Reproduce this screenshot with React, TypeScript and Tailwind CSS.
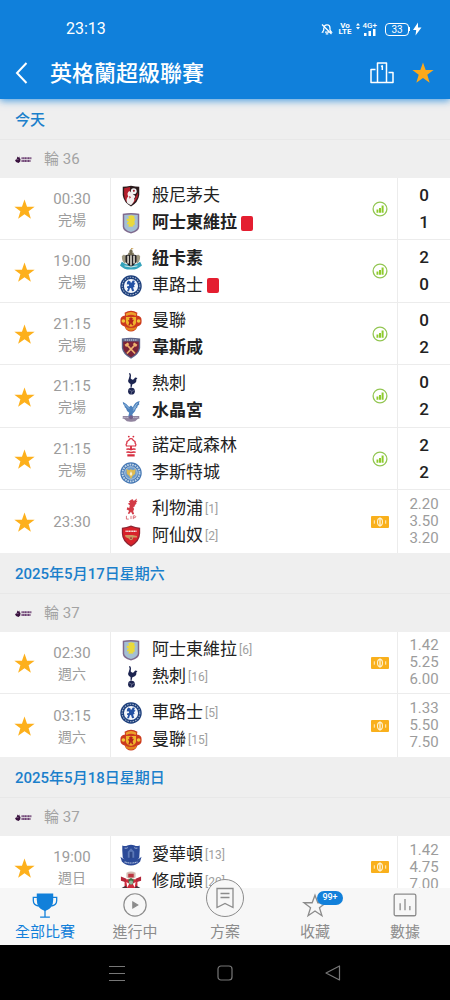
import { useState, type ReactNode } from "react";

type Club =
  | "bournemouth" | "villa" | "newcastle" | "chelsea" | "united" | "westham" | "spurs"
  | "palace" | "forest" | "leicester" | "liverpool" | "arsenal" | "everton" | "southampton";

interface Team {
  club: Club;
  name: string;
  rank?: number;
  winner?: boolean;
  redCard?: boolean;
}

interface Match {
  time: string;
  note?: string;
  teams: [Team, Team];
  score?: [number, number];
  odds?: string[];
}

interface MatchDay {
  title: string;
  round: string;
  matches: Match[];
}

const DAYS: MatchDay[] = [
  {
    title: "今天",
    round: "輪 36",
    matches: [
      { time: "00:30", note: "完場", score: [0, 1], teams: [{ club: "bournemouth", name: "般尼茅夫" }, { club: "villa", name: "阿士東維拉", winner: true, redCard: true }] },
      { time: "19:00", note: "完場", score: [2, 0], teams: [{ club: "newcastle", name: "紐卡素", winner: true }, { club: "chelsea", name: "車路士", redCard: true }] },
      { time: "21:15", note: "完場", score: [0, 2], teams: [{ club: "united", name: "曼聯" }, { club: "westham", name: "韋斯咸", winner: true }] },
      { time: "21:15", note: "完場", score: [0, 2], teams: [{ club: "spurs", name: "熱刺" }, { club: "palace", name: "水晶宮", winner: true }] },
      { time: "21:15", note: "完場", score: [2, 2], teams: [{ club: "forest", name: "諾定咸森林" }, { club: "leicester", name: "李斯特城" }] },
      { time: "23:30", odds: ["2.20", "3.50", "3.20"], teams: [{ club: "liverpool", name: "利物浦", rank: 1 }, { club: "arsenal", name: "阿仙奴", rank: 2 }] },
    ],
  },
  {
    title: "2025年5月17日星期六",
    round: "輪 37",
    matches: [
      { time: "02:30", note: "週六", odds: ["1.42", "5.25", "6.00"], teams: [{ club: "villa", name: "阿士東維拉", rank: 6 }, { club: "spurs", name: "熱刺", rank: 16 }] },
      { time: "03:15", note: "週六", odds: ["1.33", "5.50", "7.50"], teams: [{ club: "chelsea", name: "車路士", rank: 5 }, { club: "united", name: "曼聯", rank: 15 }] },
    ],
  },
  {
    title: "2025年5月18日星期日",
    round: "輪 37",
    matches: [
      { time: "19:00", note: "週日", odds: ["1.42", "4.75", "7.00"], teams: [{ club: "everton", name: "愛華頓", rank: 13 }, { club: "southampton", name: "修咸頓", rank: 20 }] },
    ],
  },
];

const CRESTS: Record<Club, ReactNode> = {
  bournemouth: (
    <>
      <path d="M3 2Q7 2 12 .8Q17 2 21 2V11Q20 19 12 23.5Q4 19 3 11Z" fill="#2a1a1c" />
      <path d="M4.5 3.5L11 2.3V12L7 18.5Q4.500 15 4.500 10Z" fill="#b51f2c" />
      <path d="M15 17.500L19.500 8V12Q18.500 16.500 13 21Z" fill="#b51f2c" />
      <path d="M8 20Q6 15 9 12.500Q7 9 10 6.500Q13 8 15 11Q18 12 15.500 14.500Q16.500 18 12 22Z" fill="#f3eeee" />
      <circle cx="15" cy="6.800" r="3.200" fill="#f2f2f2" />
      <path d="M14 6l1.200-1L16.300 6l-.5 1.400h-1.400zM10 12l2 1-1.500 2z" fill="#a31c29" />
    </>
  ),
  villa: (
    <>
      <path d="M3 2Q12 0 21 2V16Q21 21 12 23.500Q3 21 3 16Z" fill="#806a8e" />
      <path d="M4.600 3.400Q12 1.800 19.400 3.400V15.500Q19.400 19.600 12 21.800Q4.600 19.600 4.600 15.500Z" fill="#a4bfd4" />
      <path d="M9 4.500l3-1 4 .8-.6 2.200 1.400 2-1.200 1.600.7 3.600-2 .4.500 1.600-5.600.4.400-3-2 .6.200-2.300 2-.8-2.600-1.400.4-2 2.200.3z" fill="#ead93c" />
    </>
  ),
  newcastle: (
    <>
      <path d="M2 15Q12 23 22 15L24 19Q18 24 12 23.500Q5 24 0 19Z" fill="#35a3bb" />
      <path d="M2 9Q4 5.500 7 9L6 17Q2 16 2 9ZM22 9Q20 5.500 17 9L18 17Q22 16 22 9Z" fill="#a09a82" />
      <path d="M6 8Q12 5.500 18 8V15Q16 19 12 20.500Q8 19 6 15Z" fill="#242326" />
      <path d="M8 8.500h1.600v8.500H8zM11.200 8h1.600v11h-1.600zM14.500 8.500h1.600v8.500h-1.600z" fill="#efe9dc" />
      <path d="M9 7.500V5l1.200.7V3L12 1l1.800 2v2.700L15 5v2.500z" fill="#746d53" />
      <path d="M12 1V0l3 .6-2 1z" fill="#c89e50" />
      <path d="M5 19.500Q12 22 19 19.500" fill="none" stroke="#e2f1ee" strokeWidth="1" />
    </>
  ),
  chelsea: (
    <>
      <circle cx="12" cy="12" r="11.700" fill="#1d3f7c" />
      <circle cx="12" cy="12" r="9.600" fill="none" stroke="#a3b4cc" strokeWidth="1.200" strokeDasharray="1.600 1.300" />
      <circle cx="12" cy="12" r="7.700" fill="#f4f7fb" />
      <path d="M9 6l2.400 1 .6 2 2-3 2.200.4-.7 2.200 1.500.8-1.800 1.800.8 2-1.800.5 1.300 3.400-2.300.5-1.200-3.400-1.200.3-1 3.100H7.600l1.300-3.200-1.300-.4.300-1.600 2.100-.4-.6-1.900-2 .2.200-2z" fill="#2452a4" />
    </>
  ),
  united: (
    <>
      <path d="M5 3Q12-1.500 19 3L18.500 6Q24 6.500 23.500 12Q24 17 19 18Q17 23.500 12 23.500Q7 23.500 5 18Q0 17 .5 12Q0 6.500 5.500 6Z" fill="#cc3a1d" />
      <path d="M6 4Q12 .5 18 4L17 6.500Q12 4 7 6.500Z" fill="#eda02a" />
      <path d="M5.500 18Q12 21.500 18.500 18L17 21Q12 24 7 21Z" fill="#e3861f" />
      <circle cx="3.700" cy="12" r="2" fill="#f2c53b" />
      <circle cx="20.300" cy="12" r="2" fill="#f2c53b" />
      <path d="M6.500 7.500h11v6Q17 17 12 18.300Q7 17 6.500 13.500Z" fill="#efb42c" />
      <path d="M10 9l2-1 2 1-.5 2 1.700-.5-1.500 3.500 1 2.500h-1.700L12 14.500l-1.500 2.500H9l1-3.500-1.500-2.500 1.800.4z" fill="#b3221c" />
    </>
  ),
  westham: (
    <>
      <path d="M2 1.500Q12 .3 22 1.500V12Q21 19 12 23.700Q3 19 2 12Z" fill="#5b6388" />
      <path d="M3.500 5H20.500V12Q19.500 18 12 22Q4.500 18 3.500 12Z" fill="#7b2338" />
      <path d="M5 3.200H19" stroke="#dcdfe8" strokeWidth="1.200" strokeDasharray="1.500 .8" />
      <path d="M7 8l9.500 10M17 8L7.500 18" stroke="#efb36e" strokeWidth="1.800" />
      <path d="M5 8.500L8.500 6l1.500 2-3.400 2.800zM19 8.500L15.500 6 14 8l3.400 2.800z" fill="#efb36e" />
    </>
  ),
  spurs: (
    <>
      <circle cx="12.500" cy="19.800" r="3.700" fill="#1c2450" />
      <path d="M10 18.500l3 1.500 2.500-1M12 23l1-3" fill="none" stroke="#929ab5" strokeWidth=".6" />
      <path d="M9.800 0Q12 0 12 2.500L11.700 6Q14 9 16.500 4.800L19 5.500L17.800 7Q18.500 11 13.500 12.200L12.500 16H11.500V12Q7.500 10 9.500 6.500L10.500 3Z" fill="#1c2450" />
    </>
  ),
  palace: (
    <>
      <path d="M3 17.500h18v2H22L19 21Q17 24 12 23.700Q7 24 5 21L2 19.500H3Z" fill="#91849f" />
      <path d="M4 19h16" stroke="#dbdce7" strokeWidth="1" strokeDasharray="1 1" />
      <path d="M3 2Q7 4 10 7.500L12 6L14 8Q16 2 21.500 1Q20 4 21 5Q18.500 6 19 8Q17 9 16.500 12L13.500 15.500L14 18H9L10 14Q7 12 6.500 9Q4.500 8 5 6.500Q3 5 3 2Z" fill="#4e82bd" />
      <path d="M5 4.500l5 5M19 3.500l-4.500 6M17.500 7l-3 4.500" stroke="#b3d4ef" strokeWidth=".8" />
      <circle cx="12" cy="18.800" r="2.200" fill="#74618c" />
    </>
  ),
  forest: (
    <>
      <circle cx="9.600" cy="1.700" r="1" fill="#d72d3f" />
      <circle cx="14.600" cy="1.700" r="1" fill="#d72d3f" />
      <path d="M12 4Q14 4 14.500 6Q17 6.500 16.500 9Q18 10 17 12H7Q6 10 7.500 9Q7 6.500 9.500 6Q10 4 12 4Z" fill="#fff" stroke="#d72d3f" strokeWidth="1.300" />
      <path d="M11 12h2v3h-2zM7 14.800q2.500-1 5 .2 2.500-1 5-.2v1.600q-2.500-.6-5 .4-2.500-1-5-.4zM7 18q2.500-.8 5 .2 2.500-1 5-.2v1.600q-2.500-.4-5 .4-2.500-.8-5-.4zM8 21h8v2.500H8z" fill="#d72d3f" />
    </>
  ),
  leicester: (
    <>
      <circle cx="12" cy="12" r="11.700" fill="#4678b4" />
      <circle cx="12" cy="12" r="9.300" fill="none" stroke="#c1d5e8" strokeWidth="2" strokeDasharray="1.800 1" />
      <circle cx="12" cy="12" r="6.900" fill="#6f9ccb" stroke="#dce8f2" strokeWidth=".7" />
      <path d="M7 7.500L10 9l2-1 2 1 3-1.500-.5 5.500-2.500 2-2 3.500-2-3.500L7.500 13z" fill="#e0bb50" />
      <path d="M12 10l1.500 3-1.500 2.500-1.500-2.500z" fill="#f8efd2" />
    </>
  ),
  liverpool: (
    <>
      <path d="M12 2l2-.6 1 2 3.500-2.800-.8 2.800 1.500-.3-2 2.500 1.200.3-2.500 2 .8.8-2.300 1.300 1 2-1 2.500 1 3-1.700.5-1.700-3-2 2.500-1.500-.7 1.500-3-2.700-1.300.6-2.500 2.200 1 .6-3-2.200-1.600L11 5l-1.500-1z" fill="#d23a46" />
      <path d="M7 19.500V23H9.500M12 19.500V23M14.500 23v-3.500h2q1.500 1 0 2h-2" fill="none" stroke="#d96872" strokeWidth="1" />
    </>
  ),
  arsenal: (
    <>
      <path d="M2 3Q7 2.500 12 .5Q17 2.500 22 3V9Q22 18 12 23.700Q2 18 2 9Z" fill="#8c2633" />
      <path d="M3.300 4Q8 3.600 12 2Q16 3.600 20.700 4V9Q20.500 17 12 22Q3.500 17 3.300 9Z" fill="#d8222b" />
      <path d="M6 6.800H18" stroke="#f6e8e8" strokeWidth="1.700" strokeDasharray="1.400 .4" />
      <path d="M5.500 11h8l5 1v1.600h-4l-1.500 1.500H10l-4-2z" fill="#cf9a62" />
      <circle cx="12" cy="14.300" r="2.300" fill="#c39a62" />
      <circle cx="12" cy="14.300" r="1" fill="#9d2b33" />
    </>
  ),
  everton: (
    <>
      <path d="M2.500 1.500Q6 3 8 1.500Q12 .3 16 1.500Q18 3 21.500 1.500V7L21 15Q17 20 12 21Q7 20 3 15L2.500 7Z" fill="#2b4a98" />
      <path d="M8.500 15V8.500L12 4.500L15.500 8.500V15Z" fill="#5b78b8" />
      <path d="M10.500 8.500h3v7h-3z" fill="#2c4687" />
      <path d="M5 4.500Q7 5 8.500 4M19 4.500Q17 5 15.500 4" stroke="#a8b8db" fill="none" />
      <path d="M.5 14Q4 17.500 12 18Q20 17.500 23.500 14L22 19Q18 23.500 12 23.500Q6 23.500 2 19Z" fill="#2b4a98" />
      <path d="M5 19.500Q12 22 19 19.500" stroke="#b4c3e0" strokeWidth="1.200" strokeDasharray="1.400 .5" fill="none" />
    </>
  ),
  southampton: (
    <>
      <path d="M7 2Q12-1 17 2V7Q12 10 7 7Z" fill="#d3bdb3" />
      <path d="M9 3h6v4H9z" fill="#bb3440" />
      <path d="M5 9h14v7Q18 21 12 23Q6 21 5 16Z" fill="#cf2b3d" />
      <path d="M1 6l6 2.500L5.500 12 1 10.500zM23 6l-6 2.500 1.500 3.500 4.500-1.500z" fill="#b32639" />
      <path d="M9 9.500l3-2 3 2-1 5h-4z" fill="#397746" />
      <path d="M7 12l3 2-2 4zM17 12l-3 2 2 4z" fill="#fff" />
      <circle cx="12" cy="12.500" r="2.200" fill="#8fb99a" />
      <path d="M1 19l5-3 3 4-5 3zM23 19l-5-3-3 4 5 3z" fill="#453139" />
    </>
  ),
};

function Star({ className }: { className: string }) {
  return (
    <svg viewBox="0 0 24 24" className={className} aria-hidden="true">
      <path d="M12 .5l2.900 8.300h8.700l-6.900 5.200 2.600 8.700L12 17.500l-7.300 5.200 2.600-8.700L.4 8.800h8.700z" />
    </svg>
  );
}

function LeagueLogo() {
  return (
    <svg viewBox="0 0 34 14" className="h-[7px] w-[17px]" aria-hidden="true">
      <path d="M5 1l2 2 2-2v3l2 2-.5 5L7 14 2 12 0 8l3-1 1-3z" fill="#3a123f" />
      <path d="M5 6l2 .5-1.500 2z" fill="#d9c4dc" />
      <path d="M13 4.500H33M13 10H31" stroke="#6d4173" strokeWidth="3.600" strokeDasharray="2.600 .6" />
    </svg>
  );
}

function StatsIcon() {
  return (
    <svg viewBox="0 0 16 16" className="size-4" aria-hidden="true">
      <circle cx="8" cy="8" r="6.900" fill="none" stroke="#93c653" strokeWidth="1.300" />
      <path d="M4.500 8.500h1.900v3.300H4.500zM7 7h2v4.800H7zM9.600 4.500h2v7.300h-2z" fill="#8ecb2c" />
    </svg>
  );
}

function OddsIcon() {
  return (
    <svg viewBox="0 0 18 12" className="h-3 w-[18px]" aria-hidden="true">
      <rect width="18" height="12" rx="1" fill="#f9b01c" />
      <ellipse cx="9" cy="6" rx="2.500" ry="3.600" fill="none" stroke="#fff1cd" strokeWidth="1.100" />
      <path d="M9 1.500v9" stroke="#fff1cd" strokeWidth="1.400" />
      <path d="M3.300 4.300v3.400M14.700 4.300v3.400" stroke="#fff1cd" strokeWidth="1" />
    </svg>
  );
}

function StatusBar() {
  return (
    <div className="flex h-[22px] items-center pl-[66px] pr-7 text-white">
      <span className="text-[16px]">23:13</span>
      <div className="ml-auto flex items-center">
        <svg viewBox="0 0 24 24" className="size-3" fill="none" stroke="currentColor" strokeWidth="2.500" aria-hidden="true">
          <path d="M7 6Q9 3.500 12 3.500Q18 4 18 10V14L21 18H8M5.500 9V14L3 18H5M9.500 21.500H14.500M2 3L21 22" />
        </svg>
        <span className="ml-1.5 flex w-3 flex-col items-center text-[8px] leading-[6px] font-bold">
          <span>Vo</span>
          <span>LTE</span>
        </span>
        <svg viewBox="0 0 6 12" className="ml-1 h-3 w-1.5" fill="currentColor" aria-hidden="true">
          <path d="M3 0l2 2.500H1zM3 6.500L1 4h4z" />
        </svg>
        <span className="flex w-4 flex-col items-end">
          <span className="text-[8px] leading-[6px] font-medium">4G+</span>
          <svg viewBox="0 0 14 7" className="h-[7px] w-3.5" fill="currentColor" aria-hidden="true">
            <path d="M1 4h2.500v3H1zM5.500 2H8v5H5.500zM10 0h2.500v7H10z" />
          </svg>
        </span>
        <span className="ml-2 flex h-[13px] w-6 items-center justify-center rounded-[4px] border border-white text-[10px]">33</span>
        <span className="h-1 w-px bg-white" />
        <svg viewBox="0 0 10 14" className="ml-0.5 h-3.5 w-2.5" fill="currentColor" aria-hidden="true">
          <path d="M6 .5L1 8h3.200L3.500 13.500 9.500 5.500H6z" />
        </svg>
      </div>
    </div>
  );
}

function TeamLine({ team }: { team: Team }) {
  return (
    <div className="flex h-[27px] items-center">
      <svg viewBox="0 0 24 24" className="size-[22px] shrink-0" aria-hidden="true">
        {CRESTS[team.club]}
      </svg>
      <span className={`ml-2.5 text-[17px] whitespace-nowrap text-[#222] ${team.winner ? "font-bold" : ""}`}>{team.name}</span>
      {team.rank && <span className="ml-0.5 text-[12px] text-[#a0a0a0]">[{team.rank}]</span>}
      {team.redCard && <span className="ml-1 h-[15px] w-3 rounded-xs bg-[#e41e30]" />}
    </div>
  );
}

function MatchRow({ match }: { match: Match }) {
  const [starred, setStarred] = useState(true);

  return (
    <li className="flex h-[62px] border-b border-[#ececec] bg-white last:border-b-0 even:h-[63px]">
      <button aria-label="收藏" aria-pressed={starred} onClick={() => setStarred(!starred)} className="flex w-12 shrink-0 items-center justify-center pt-0.5">
        <Star className={`size-[21px] ${starred ? "fill-[#fdb01c]" : "fill-gray-300"}`} />
      </button>
      <div className="mr-3.5 flex w-12 shrink-0 flex-col justify-center pt-0.5 text-center text-[#9c9c9c]">
        <span className="text-[15px] leading-[21px]">{match.time}</span>
        {match.note && <span className="text-[14px] leading-[21px]">{match.note}</span>}
      </div>
      <div className="flex min-w-0 flex-1 flex-col justify-center border-l border-[#ececec] pt-0.5 pl-[9px]">
        {match.teams.map((team) => (
          <TeamLine key={team.club} team={team} />
        ))}
      </div>
      <div className="mr-2 flex w-[18px] shrink-0 items-center justify-center">{match.odds ? <OddsIcon /> : <StatsIcon />}</div>
      <div className="flex w-[53px] shrink-0 flex-col justify-center border-l border-[#ececec] text-center">
        {match.score?.map((goals, i) => (
          <span key={i} className="text-[17px] leading-[27px] font-medium text-[#222]">{goals}</span>
        ))}
        {match.odds?.map((odd) => (
          <span key={odd} className="text-[15px] leading-[17px] text-[#9c9c9c]">{odd}</span>
        ))}
      </div>
    </li>
  );
}

function TabItem({ label, active, children }: { label: string; active?: boolean; children: ReactNode }) {
  return (
    <button className={`flex flex-1 flex-col items-center justify-end ${active ? "text-[#1280da]" : "text-[#8c8c8c]"}`}>
      {children}
      <span className="text-[15px] leading-[26px]">{label}</span>
    </button>
  );
}

export default function App() {
  return (
    <div className="flex h-screen flex-col bg-[#efefef] font-[Roboto,'Noto_Sans_CJK_TC',sans-serif]">
      <header className="relative z-10 h-[99px] shrink-0 bg-[#1080db] pt-[18px] shadow-[0_2px_7px_#1080dbb0]">
        <StatusBar />
        <div className="mt-[11px] flex h-11 items-center pr-4 pl-3.5 text-white">
          <button aria-label="返回">
            <svg viewBox="0 0 16 24" className="h-6 w-4" fill="none" stroke="currentColor" strokeWidth="2" aria-hidden="true">
              <path d="M12.500 2L3 12l9.500 10" />
            </svg>
          </button>
          <h1 className="ml-5 text-[22px] font-medium">英格蘭超級聯賽</h1>
          <button aria-label="排名" className="ml-auto">
            <svg viewBox="0 0 24 22" className="h-[22px] w-6" fill="none" stroke="currentColor" strokeWidth="1.500" strokeLinejoin="round" aria-hidden="true">
              <path d="M7.500 20.500V1H16.500V20.500M5.500 7.500H1V20.500H23V10.500H18.500M11 4.500L12.300 3.800V8" />
            </svg>
          </button>
          <button aria-label="收藏聯賽" className="ml-[18px]">
            <Star className="size-[22px] fill-[#fba91b]" />
          </button>
        </div>
      </header>

      <main className="min-h-0 flex-1 overflow-y-auto [scrollbar-width:none]">
        {DAYS.map((day) => (
          <section key={day.title}>
            <h2 className="flex h-[41px] items-center border-b border-[#e8e8e8] pt-0.5 pl-[15px] text-[15px] font-medium text-[#1b7fcb]">{day.title}</h2>
            <div className="flex h-[38px] items-center pl-[15px]">
              <LeagueLogo />
              <span className="ml-3 text-[15px] text-[#a3a3a3]">{day.round}</span>
            </div>
            <ul>
              {day.matches.map((match) => (
                <MatchRow key={match.teams[0].club} match={match} />
              ))}
            </ul>
          </section>
        ))}
      </main>

      <nav className="relative z-10 flex h-[57px] shrink-0 bg-[#f7f7f7]">
        <TabItem label="全部比賽" active>
          <svg viewBox="0 0 24 24" className="size-[26px]" fill="none" stroke="currentColor" strokeWidth="1.200" aria-hidden="true">
            <path d="M5 1h14v5q0 8-7 10Q5 14 5 6z" fill="currentColor" />
            <path d="M5 4H1.200v3q0 4.500 5 5M19 4h3.800v3q0 4.500-5 5M12 15v7M7.500 22.300h9" />
          </svg>
        </TabItem>
        <TabItem label="進行中">
          <svg viewBox="0 0 24 24" className="size-[26px]" fill="none" stroke="currentColor" strokeWidth="1.100" aria-hidden="true">
            <circle cx="12" cy="11" r="10.300" />
            <path d="M10 8.300l4.500 2.700-4.500 2.700z" fill="currentColor" />
          </svg>
        </TabItem>
        <TabItem label="方案">
          <span className="mb-0.5 flex size-[38px] shrink-0 items-center justify-center rounded-full border border-[#8c8c8c] bg-[#f7f7f7]">
            <svg viewBox="0 0 22 24" className="h-6 w-[22px]" fill="none" stroke="currentColor" strokeWidth="1.300" aria-hidden="true">
              <path d="M3 2.500H19V21.500L11 17.500L3 21.500ZM6.500 7.500H15.500M6.500 11.500H15.500" />
            </svg>
          </span>
        </TabItem>
        <TabItem label="收藏">
          <span className="relative">
            <svg viewBox="0 0 24 24" className="size-[26px]" fill="none" stroke="currentColor" strokeWidth="1.200" aria-hidden="true">
              <path d="M12 2l2.600 7h7.600l-6.100 4.600 2.300 7.400L12 16.600 5.600 21l2.300-7.400L1.800 9h7.600z" />
            </svg>
            <span className="absolute -top-0.5 left-[15px] flex h-[14px] w-[26px] items-center justify-center rounded-full bg-[#1280da] text-[9px] font-medium text-white">99+</span>
          </span>
        </TabItem>
        <TabItem label="數據">
          <svg viewBox="0 0 24 24" className="size-[26px]" fill="none" stroke="currentColor" strokeWidth="1.200" aria-hidden="true">
            <rect x="2" y="1" width="20" height="20" rx="1.500" />
            <path d="M7.500 9.500v6.500M12 5.500v10.500M16.500 12v4" />
          </svg>
        </TabItem>
      </nav>

      <div className="grid h-[55px] shrink-0 grid-cols-3 items-center justify-items-center bg-black px-[14%] text-[#777]">
        <button aria-label="最近">
          <svg viewBox="0 0 16 16" className="size-4" fill="none" stroke="currentColor" strokeWidth="1" aria-hidden="true">
            <path d="M0 1.500h16M0 8.500h16M0 15.500h16" />
          </svg>
        </button>
        <button aria-label="主頁">
          <svg viewBox="0 0 16 16" className="size-4" fill="none" stroke="currentColor" strokeWidth="1.200" aria-hidden="true">
            <rect x="1" y="1" width="14" height="14" rx="3" />
          </svg>
        </button>
        <button aria-label="後退">
          <svg viewBox="0 0 16 16" className="size-4" fill="none" stroke="currentColor" strokeWidth="1.200" strokeLinejoin="round" aria-hidden="true">
            <path d="M14.500 1v14L1 8z" />
          </svg>
        </button>
      </div>
    </div>
  );
}
